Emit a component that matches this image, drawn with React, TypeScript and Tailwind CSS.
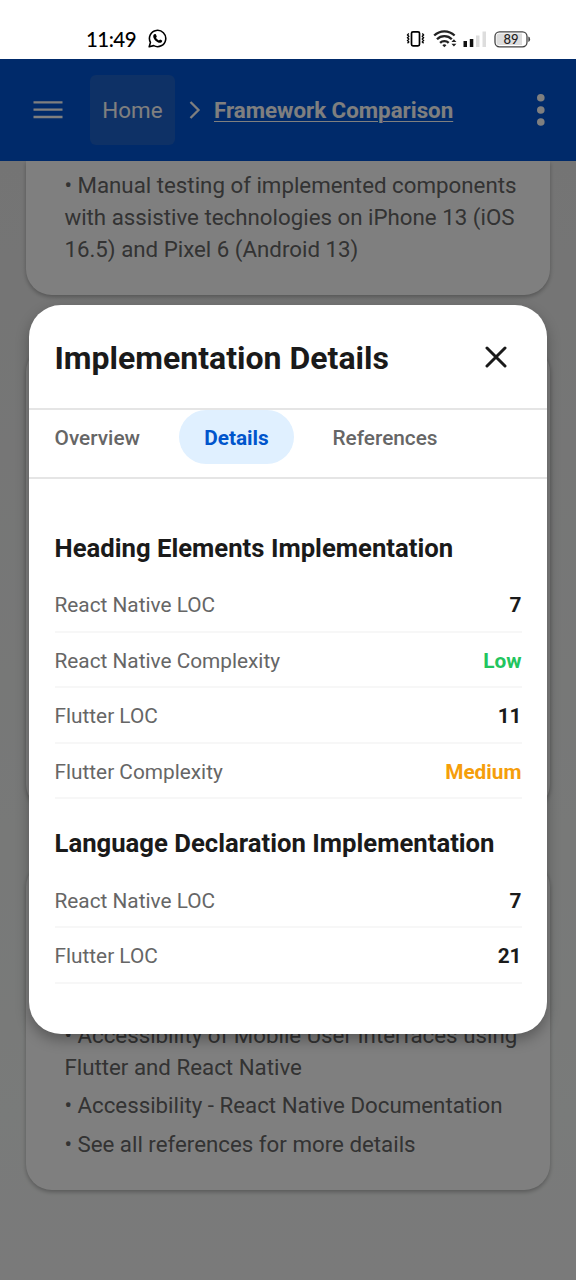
import React from "react";

const S = "font-['Roboto',sans-serif]";

function StatusBar() {
  return (
    <div className="flex h-[59px] shrink-0 items-center bg-white pt-[18px] pr-[45px] pl-[86px] text-black">
      <span className="w-[62px] font-['Lato',sans-serif] text-[20.5px] leading-[24px] font-medium tracking-[-0.55px]">11:49</span>
      <svg width="19" height="19" viewBox="0 0 24 24">
        <path fill="none" stroke="#000" strokeWidth="2" strokeLinejoin="round" d="M1.5 22.5l1.6-5.6A10.3 10.3 0 1 1 7.2 21z" />
        <path fill="#000" d="M8.600 6.200c-.5 0-2 1-2 2.900 0 3.800 5.100 8.400 8.300 8.400 2 0 3.100-1.500 3.100-2.700 0-.4-2.300-1.600-2.700-1.600-.5 0-1 1.300-1.500 1.300-.8 0-3.600-2.500-3.600-3.400 0-.5.900-.9.900-1.400 0-.4-.9-2.700-1.300-3.200-.2-.3-.7-.3-1.200-.3z" />
      </svg>
      <div className="flex-1" />
      <svg width="125" height="22" viewBox="0 0 125 22">
        <rect x="5.500" y="3.800" width="8" height="14" rx="1.500" fill="none" stroke="#000" strokeWidth="1.700" />
        <path d="M2.800 5.500l-1.300 1.400 1.300 1.400-1.300 1.400 1.300 1.400-1.300 1.400 1.300 1.400-1.300 1.400M16.300 5.500l1.300 1.400-1.300 1.400 1.300 1.400-1.300 1.400 1.300 1.400-1.300 1.400 1.300 1.400" fill="none" stroke="#000" strokeWidth="1.300" />
        <g fill="none" stroke="#222" strokeWidth="2.300">
          <path d="M28.200 7.500a14.500 14.500 0 0 1 20.400 0" />
          <path d="M31 11.300a10.300 10.300 0 0 1 14.800 0" />
          <path d="M34.100 14.900a6 6 0 0 1 8.600 0" />
        </g>
        <path d="M36.400 17.300a2.500 2.500 0 0 1 4 0l-2 2z" fill="#222" />
        <path d="M45.400 14l2.500-2.700 2.500 2.700zM45.400 15.800l2.500 2.700 2.500-2.700z" fill="#222" />
        <rect x="57.500" y="13" width="3.500" height="6" fill="#111" />
        <rect x="63.800" y="11" width="3.500" height="8" fill="#111" />
        <rect x="70" y="7.500" width="3.500" height="11.500" fill="#ddd" />
        <rect x="76.500" y="3.500" width="3.500" height="15.500" fill="#ddd" />
        <rect x="89" y="3.800" width="32" height="15" rx="4.500" fill="#fff" stroke="#444" strokeWidth="1.300" />
        <path d="M93 5.500h23v11.600h-23a2.500 2.500 0 0 1-2.500-2.500V8a2.500 2.500 0 0 1 2.500-2.500z" fill="#ddd" />
        <path d="M122.300 8.500q1.800 0 1.800 2.700t-1.800 2.700z" fill="#444" />
        <text x="105" y="16" textAnchor="middle" className="font-['Lato',sans-serif] text-[13px] font-medium" fill="#222">89</text>
      </svg>
    </div>
  );
}

function Header() {
  return (
    <header className="relative z-10 flex h-[102px] shrink-0 items-center bg-[#0055d4] pl-[33px] text-white">
      <svg width="30" height="20" viewBox="0 0 30 20" stroke="#fff" strokeWidth="2.300">
        <path d="M.5 2.300h29M.5 9.700h29M.5 17h29" />
      </svg>
      <div className="ml-[27px] flex h-[70px] w-[85px] items-center justify-center rounded-[6px] bg-[#1c62cc] pt-[2px] text-[22.4px]">Home</div>
      <svg className="ml-[13px]" width="14" height="20" viewBox="0 0 14 20" fill="none" stroke="#fff" strokeWidth="2.300">
        <path d="M2.500 2l8 8-8 8" />
      </svg>
      <span className="ml-[12px] pt-[2px] text-[22.300px] font-bold underline decoration-1 underline-offset-[3px]">Framework Comparison</span>
      <svg className="ml-auto mr-[31px]" width="9" height="34" viewBox="0 0 9 34" fill="#fff">
        <circle cx="4.800" cy="4.800" r="3.800" />
        <circle cx="4.800" cy="17" r="3.800" />
        <circle cx="4.800" cy="29" r="3.800" />
      </svg>
    </header>
  );
}

const card = "mx-[26px] bg-white shadow-[0_2px_4px_rgba(0,0,0,0.28)] pl-[38.400px] text-[22.300px] leading-[32px] whitespace-nowrap text-[#666]";

function Row({ label, value, color = "text-[#1a1a1a]" }: { label: string; value: string; color?: string }) {
  return (
    <div className="flex h-[55.600px] items-center justify-between border-b-2 border-[#f7f7f7] pt-[4px] text-[20.800px]">
      <span className="text-[#666]">{label}</span>
      <span className={`font-bold ${color}`}>{value}</span>
    </div>
  );
}

function Modal() {
  return (
    <section role="dialog" className="absolute top-[305px] left-[29px] flex h-[729px] w-[518px] flex-col rounded-[32px] bg-white shadow-[0_6px_14px_rgba(0,0,0,0.3)]">
      <div className="flex h-[105px] shrink-0 items-center justify-between border-b-2 border-[#e5e5e5] pr-[40px] pl-[25.500px]">
        <h1 className="pt-[2px] text-[32px] font-bold text-[#1a1a1a]">Implementation Details</h1>
        <svg width="22" height="22" viewBox="0 0 22 22" stroke="#1a1a1a" strokeWidth="3" strokeLinecap="round">
          <path d="M2 2l18 18M20 2L2 20" />
        </svg>
      </div>
      <div className="flex h-[69px] shrink-0 items-start border-b-2 border-[#e5e5e5] text-[20.800px] font-medium text-[#666]">
        <span className="w-[150px] pl-[25.600px] leading-[57px]">Overview</span>
        <span className="h-[54px] w-[115px] rounded-full bg-[#e0f0ff] text-center leading-[57px] font-bold text-[#0055cc]">Details</span>
        <span className="ml-[38.500px] leading-[57px]">References</span>
      </div>
      <div className="px-[25.500px] pt-[51px]">
        <h2 className="h-[47px] text-[25.700px] leading-[36px] font-bold text-[#1a1a1a]">Heading Elements Implementation</h2>
        <Row label="React Native LOC" value="7" />
        <Row label="React Native Complexity" value="Low" color="text-[#22c55e]" />
        <Row label="Flutter LOC" value="11" />
        <Row label="Flutter Complexity" value="Medium" color="text-[#f59e0b]" />
        <h2 className="mt-[26px] h-[47px] text-[25.700px] leading-[36px] font-bold text-[#1a1a1a]">Language Declaration Implementation</h2>
        <Row label="React Native LOC" value="7" />
        <Row label="Flutter LOC" value="21" />
      </div>
    </section>
  );
}

export default function App() {
  return (
    <div className={`relative flex h-[1280px] w-[576px] flex-col overflow-hidden ${S}`}>
      <StatusBar />
      <Header />
      <main className="flex-1 bg-linear-to-b from-[#e9e9e9] via-[#f3f6f4] via-85% to-[#f4f4f4]">
        <div className={`${card} h-[134px] rounded-b-[26px] pt-[8px]`}>
          <p>
            • Manual testing of implemented components<br />
            with assistive technologies on iPhone 13 (iOS<br />
            16.5) and Pixel 6 (Android 13)
          </p>
        </div>
        <div className={`${card} mt-[51px] h-[464px] rounded-[26px]`} />
        <div className={`${card} mt-[51px] flex h-[329px] flex-col justify-end gap-[6.400px] rounded-[26px] pb-[30.500px]`}>
          <p>
            • Accessibility of Mobile User Interfaces using<br />
            Flutter and React Native
          </p>
          <p>• Accessibility - React Native Documentation</p>
          <p>• See all references for more details</p>
        </div>
      </main>
      <div className="absolute inset-x-0 top-[59px] bottom-0 z-20 bg-black/50" />
      <div className="absolute inset-0 z-30">
        <Modal />
      </div>
    </div>
  );
}
